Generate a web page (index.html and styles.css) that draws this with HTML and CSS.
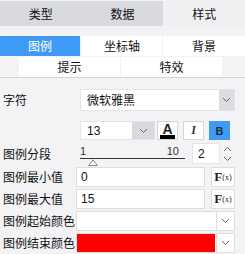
FILE: index.html
```html
<!DOCTYPE html>
<html lang="zh">
<head>
<meta charset="utf-8">
<link rel="stylesheet" href="styles.css">
</head>
<body>
<div class="tabs">
  <div class="tab">类型</div>
  <div class="tab">数据</div>
  <div class="tab active">样式</div>
</div>
<div class="subtabs">
  <div class="st-row1">
    <div class="st active">图例</div>
    <div class="st">坐标轴</div>
    <div class="st">背景</div>
  </div>
  <div class="st-row2">
    <div class="st">提示</div>
    <div class="st">特效</div>
  </div>
</div>
<div class="form">
  <div class="row r-font">
    <div class="lbl wide">字符</div>
    <div class="select">
      <span class="val">微软雅黑</span>
      <span class="arrow"><svg width="9" height="6" viewBox="0 0 9 6"><polyline points="1,1 4.5,4.5 8,1" fill="none" stroke="#666" stroke-width="1"/></svg></span>
    </div>
  </div>
  <div class="row r-size">
    <div class="size-select">
      <span class="val num">13</span>
      <span class="arrow"><svg width="9" height="6" viewBox="0 0 9 6"><polyline points="1,1 4.5,4.5 8,1" fill="none" stroke="#666" stroke-width="1"/></svg></span>
    </div>
    <div class="btn btn-a"><span class="a-letter">A</span><span class="a-bar"></span></div>
    <div class="btn btn-i">I</div>
    <div class="btn btn-b">B</div>
  </div>
  <div class="row r-seg">
    <div class="lbl">图例分段</div>
    <div class="slider">
      <div class="ticks"><span>1</span><span>10</span></div>
      <div class="track"></div>
      <svg class="thumb" width="10" height="7" viewBox="0 0 10 7"><polygon points="5,0.8 9.3,6.5 0.7,6.5" fill="#fff" stroke="#888" stroke-width="1"/></svg>
    </div>
    <div class="spinner">
      <div class="spin-input num">2</div>
      <div class="spin-arrows">
        <svg width="9" height="6" viewBox="0 0 9 6"><polyline points="1,5 4.5,1.5 8,5" fill="none" stroke="#666" stroke-width="1"/></svg>
        <svg width="9" height="6" viewBox="0 0 9 6"><polyline points="1,1 4.5,4.5 8,1" fill="none" stroke="#666" stroke-width="1"/></svg>
      </div>
    </div>
  </div>
  <div class="row r-min">
    <div class="lbl">图例最小值</div>
    <div class="input num">0</div>
    <div class="fx"><span class="fx-f">F</span><span class="fx-x">(x)</span></div>
  </div>
  <div class="row r-max">
    <div class="lbl">图例最大值</div>
    <div class="input num">15</div>
    <div class="fx"><span class="fx-f">F</span><span class="fx-x">(x)</span></div>
  </div>
  <div class="row r-start">
    <div class="lbl">图例起始颜色</div>
    <div class="color-select">
      <span class="swatch"></span>
      <span class="arrow"><svg width="9" height="6" viewBox="0 0 9 6"><polyline points="1,1 4.5,4.5 8,1" fill="none" stroke="#666" stroke-width="1"/></svg></span>
    </div>
  </div>
  <div class="row r-end">
    <div class="lbl">图例结束颜色</div>
    <div class="color-select">
      <span class="swatch red"></span>
      <span class="arrow"><svg width="9" height="6" viewBox="0 0 9 6"><polyline points="1,1 4.5,4.5 8,1" fill="none" stroke="#666" stroke-width="1"/></svg></span>
    </div>
  </div>
</div>
</body>
</html>
```

FILE: styles.css
```css
* { box-sizing: border-box; }
body {
  margin: 0;
  width: 245px;
  height: 254px;
  overflow: hidden;
  background: #f3f3f5;
  color: #111;
  font: 12px/1 "Noto Sans CJK SC", "Liberation Sans", sans-serif;
}
.num { font-family: "Liberation Sans", "DejaVu Sans", sans-serif; font-size: 12px; }

.tabs {
  display: grid;
  grid-template-columns: 1fr 1fr 1fr;
  margin-top: 1px;
  height: 25px;
}
.tab {
  background: #d9dadd;
  display: flex;
  align-items: center;
  justify-content: center;
}
.tab.active { background: #f0f0f2; }

.subtabs {
  padding-top: 10px;
  border-bottom: 1px solid #d3d3d6;
}
.st {
  background: #fff;
  display: flex;
  align-items: center;
  justify-content: center;
}
.st.active { background: #3f9af5; color: #fff; }
.st-row1 { display: flex; height: 20px; }
.st-row1 .st:nth-child(1) { width: 80px; }
.st-row1 .st:nth-child(2) { width: 80px; margin-left: 2px; }
.st-row1 .st:nth-child(3) { flex: 1; margin-left: 1px; }
.st-row2 {
  display: flex;
  height: 20px;
  margin-top: 1px;
  padding-left: 19px;
  gap: 1px;
}
.st-row2 .st { width: 101px; }

.row { display: flex; align-items: center; }
.lbl { flex: none; width: 76px; padding-left: 3px; white-space: nowrap; }
.lbl.wide { width: 80px; }

.r-font { margin-top: 11px; height: 22px; }
.r-size { margin-top: 10px; height: 19px; padding-left: 80px; }
.r-seg { margin-top: 3px; height: 21px; }
.r-min { margin-top: 3px; height: 20px; }
.r-max, .r-start, .r-end { margin-top: 2px; height: 20px; }

.select {
  width: 155px;
  height: 22px;
  background: #fff;
  border: 1px solid #e4e4e6;
  display: flex;
  align-items: stretch;
}
.select .val { flex: 1; padding-left: 6px; display: flex; align-items: center; }
.arrow {
  display: flex;
  align-items: center;
  justify-content: center;
}
.select .arrow { width: 15px; background: #dcdde0; }

.size-select {
  width: 75px;
  height: 19px;
  background: #fff;
  border: 1px solid #e4e4e6;
  display: flex;
}
.size-select .val { flex: 1; padding-left: 6px; display: flex; align-items: center; }
.size-select .arrow { width: 22px; background: #d9dadd; }

.btn {
  width: 21px;
  height: 19px;
  background: #fff;
  border: 1px solid #d6d6d8;
  margin-left: 5px;
  display: flex;
  align-items: center;
  justify-content: center;
}
.btn-a { margin-left: 2px; flex-direction: column; justify-content: flex-start; padding-top: 1px; }
.a-letter {
  font: bold 14px/12px "Liberation Sans", sans-serif;
  color: #222;
}
.a-bar { width: 15px; height: 4px; background: #000; margin-top: 0; }
.btn-i { font: italic bold 12px "Liberation Serif", serif; color: #333; }
.btn-b {
  background: #3f9af5;
  border-color: #3f9af5;
  font: bold 11px "Liberation Sans", sans-serif;
  color: #1f2a38;
}

.slider {
  position: relative;
  margin-left: 4px;
  width: 105px;
  height: 21px;
  display: flex;
  flex-direction: column;
}
.ticks {
  display: flex;
  justify-content: space-between;
  font: 11px/11px "Liberation Sans", sans-serif;
  color: #333;
  padding: 3px 6px 0 0;
  height: 14px;
}
.track { height: 1px; background: #333; margin-top: 1px; }
.thumb { position: absolute; left: 8px; top: 16px; }

.spinner {
  margin-left: 7px;
  width: 43px;
  height: 21px;
  display: flex;
}
.spin-input {
  width: 28px;
  background: #fff;
  border: 1px solid #e4e4e6;
  display: flex;
  align-items: center;
  padding-left: 5px;
}
.spin-arrows {
  flex: 1;
  display: flex;
  flex-direction: column;
  align-items: center;
  justify-content: space-between;
  padding: 3px 0 2px;
}

.input {
  width: 129px;
  height: 20px;
  background: #fff;
  border: 1px solid #dedee0;
  display: flex;
  align-items: center;
  padding-left: 4px;
}
.fx {
  margin-left: 6px;
  width: 24px;
  height: 20px;
  background: #fff;
  border: 1px solid #dedee0;
  display: flex;
  align-items: center;
  justify-content: center;
  color: #222;
}
.fx-f { font: bold 13px "Liberation Serif", serif; }
.fx-x { font: 8px "Liberation Serif", serif; margin-left: 0; }

.color-select {
  width: 159px;
  height: 20px;
  background: #fff;
  border: 1px solid #dedee0;
  display: flex;
}
.swatch { width: 138px; background: #fff; }
.swatch.red { background: #ff0000; }
.color-select .arrow { flex: 1; margin-left: 1px; border-left: 1px solid #dedee0; }
```
